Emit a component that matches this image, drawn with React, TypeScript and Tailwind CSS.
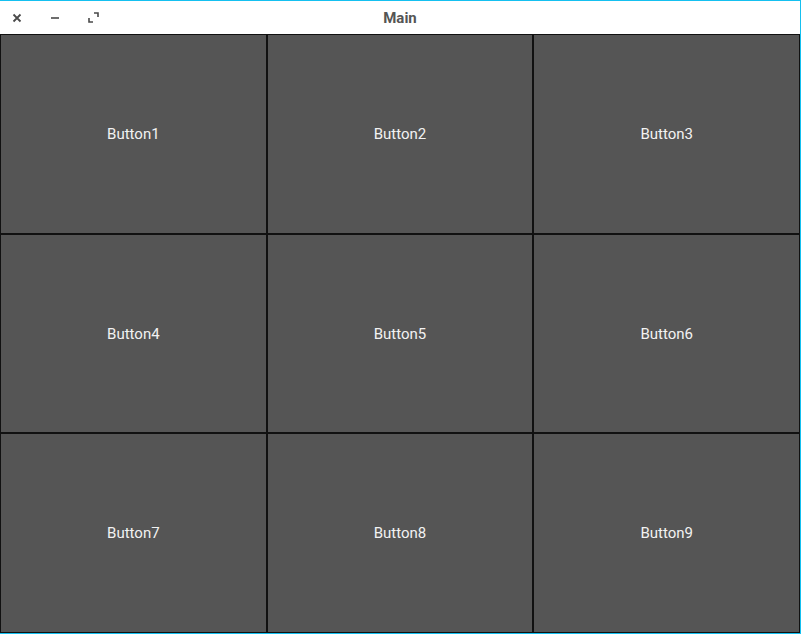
const labels = [
  "Button1",
  "Button2",
  "Button3",
  "Button4",
  "Button5",
  "Button6",
  "Button7",
  "Button8",
  "Button9",
];

const App = () => {
  return (
    <div className="w-[802px] h-[635px] bg-white font-['Roboto',sans-serif]">
      <div className="w-[801px] h-[634px] flex flex-col border-t border-r border-b border-[#15c0f0]">
        <div className="h-[33px] relative flex items-center justify-center bg-white pt-px">
          <div className="absolute left-0 top-0 h-full flex items-center">
            <div className="w-[34px] flex justify-center">
              <svg width="10" height="10" viewBox="0 0 10 10">
                <path d="M1.5 1.5 L8.5 8.5 M8.5 1.5 L1.5 8.5" stroke="#4a4a4a" strokeWidth="1.8" />
              </svg>
            </div>
            <div className="w-[42px] flex justify-center">
              <svg width="10" height="10" viewBox="0 0 10 10">
                <path d="M1 5 H9" stroke="#4a4a4a" strokeWidth="1.6" />
              </svg>
            </div>
            <div className="w-[34px] flex justify-center">
              <svg width="11" height="11" viewBox="0 0 11 11">
                <path d="M6 1 H10 V5" stroke="#4a4a4a" strokeWidth="1.6" fill="none" />
                <path d="M1 6 V10 H5" stroke="#4a4a4a" strokeWidth="1.6" fill="none" />
              </svg>
            </div>
          </div>
          <span className="text-[15px] font-bold text-[#555555]">Main</span>
        </div>
        <div className="flex-1 grid grid-cols-3 grid-rows-3 bg-[#0a0a0a]">
          {labels.map((label) => (
            <button
              key={label}
              className="bg-[#555555] border border-[#111111] text-[15px] text-[#f2f2f2] flex items-center justify-center pt-px"
            >
              {label}
            </button>
          ))}
        </div>
      </div>
    </div>
  );
};

export default App;
